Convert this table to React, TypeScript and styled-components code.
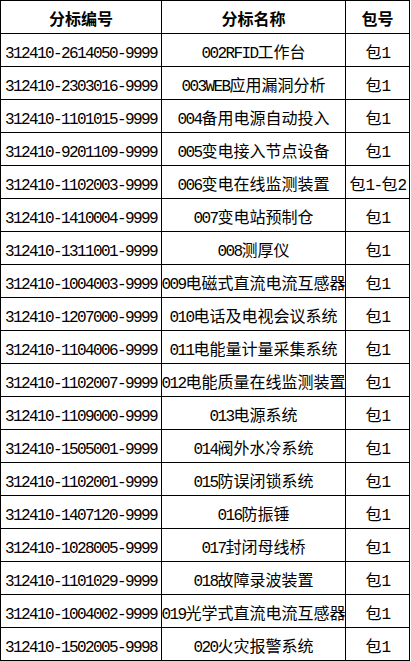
import React from "react";
import styled, { createGlobalStyle } from "styled-components";

const GlobalStyle = createGlobalStyle`
  html, body {
    margin: 0;
    padding: 0;
    background: #ffffff;
  }
  body {
    font-family: "Noto Sans CJK SC", "Liberation Mono", monospace;
    color: #000000;
  }
`;

const Grid = styled.div`
  display: grid;
  grid-template-columns: 161px 184px 64px;
  grid-auto-rows: 33px;
  width: 410px;
  box-sizing: border-box;
  border-left: 1px solid #000;
  border-top: 1px solid #000;
`;

const Cell = styled.div<{ $header?: boolean }>`
  box-sizing: border-box;
  border-right: 1px solid #000;
  border-bottom: 1px solid #000;
  display: flex;
  align-items: center;
  justify-content: center;
  white-space: nowrap;
  overflow: hidden;
  font-family: "Noto Sans CJK SC", sans-serif;
  font-size: 16px;
  font-weight: ${(p) => (p.$header ? 700 : 400)};
  padding-top: ${(p) => (p.$header ? "2px" : "5px")};
`;

const Label = styled.span`
  display: block;
  line-height: 20px;
  white-space: nowrap;
`;

const Ascii = styled.span`
  font-family: "Liberation Mono", monospace;
  font-size: 16px;
  letter-spacing: -1.6px;
`;

const rows: [string, string, string][] = [
  ["312410-2614050-9999", "002RFID工作台", "包1"],
  ["312410-2303016-9999", "003WEB应用漏洞分析", "包1"],
  ["312410-1101015-9999", "004备用电源自动投入", "包1"],
  ["312410-9201109-9999", "005变电接入节点设备", "包1"],
  ["312410-1102003-9999", "006变电在线监测装置", "包1-包2"],
  ["312410-1410004-9999", "007变电站预制仓", "包1"],
  ["312410-1311001-9999", "008测厚仪", "包1"],
  ["312410-1004003-9999", "009电磁式直流电流互感器", "包1"],
  ["312410-1207000-9999", "010电话及电视会议系统", "包1"],
  ["312410-1104006-9999", "011电能量计量采集系统", "包1"],
  ["312410-1102007-9999", "012电能质量在线监测装置", "包1"],
  ["312410-1109000-9999", "013电源系统", "包1"],
  ["312410-1505001-9999", "014阀外水冷系统", "包1"],
  ["312410-1102001-9999", "015防误闭锁系统", "包1"],
  ["312410-1407120-9999", "016防振锤", "包1"],
  ["312410-1028005-9999", "017封闭母线桥", "包1"],
  ["312410-1101029-9999", "018故障录波装置", "包1"],
  ["312410-1004002-9999", "019光学式直流电流互感器", "包1"],
  ["312410-1502005-9998", "020火灾报警系统", "包1"],
];

function Mixed({ text }: { text: string }) {
  const parts = text.match(/[\x00-\x7f]+|[^\x00-\x7f]+/g) || [];
  return (
    <Label>
      {parts.map((p, i) =>
        /^[\x00-\x7f]+$/.test(p) ? <Ascii key={i}>{p}</Ascii> : <span key={i}>{p}</span>
      )}
    </Label>
  );
}

export default function App() {
  return (
    <>
      <GlobalStyle />
      <Grid>
        <Cell $header>分标编号</Cell>
        <Cell $header>分标名称</Cell>
        <Cell $header>包号</Cell>
        {rows.map(([code, name, pkg]) => (
          <React.Fragment key={code}>
            <Cell>
              <Mixed text={code} />
            </Cell>
            <Cell>
              <Mixed text={name} />
            </Cell>
            <Cell>
              <Mixed text={pkg} />
            </Cell>
          </React.Fragment>
        ))}
      </Grid>
    </>
  );
}
